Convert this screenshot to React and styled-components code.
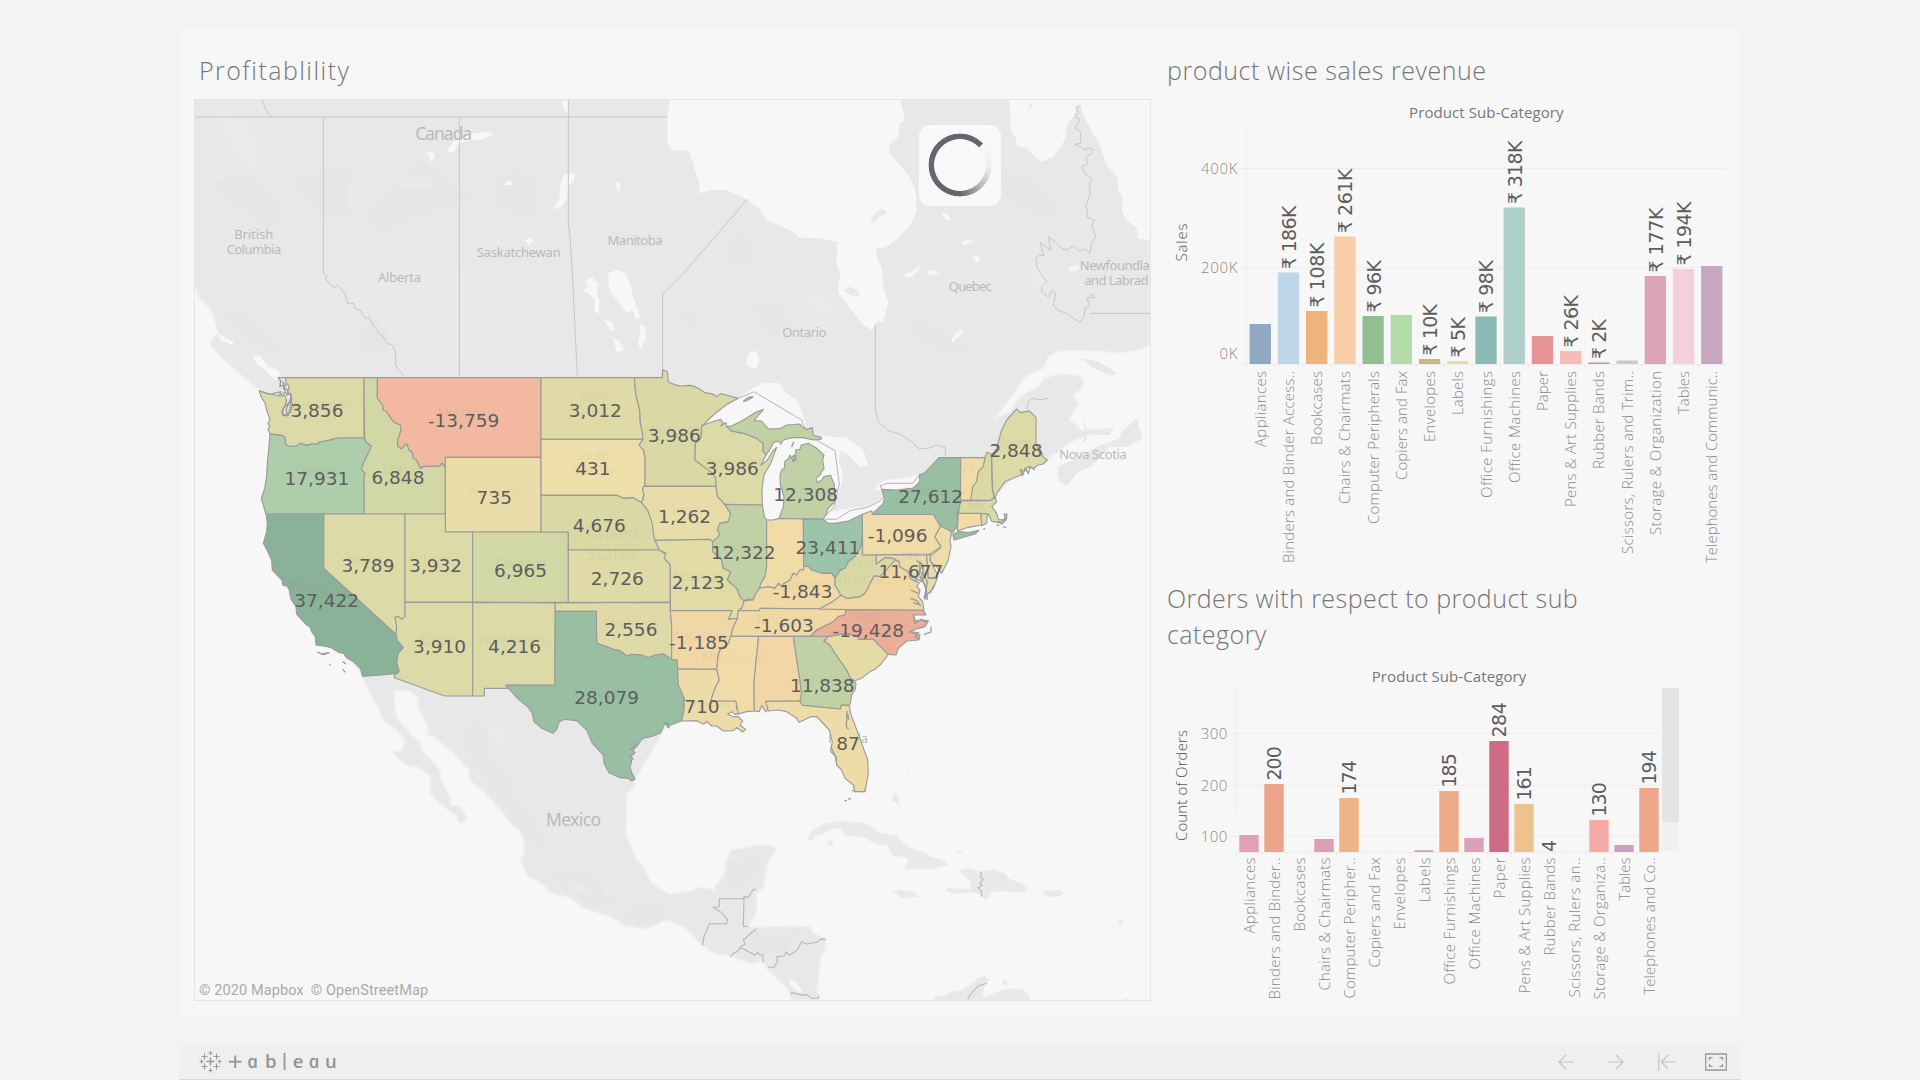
import React from 'react';
import styled, { createGlobalStyle } from 'styled-components';

const GlobalStyle = createGlobalStyle`
  * { box-sizing: border-box; }
  body { margin: 0; background: #f3f3f3; overflow: hidden; }
`;

const bookFont = '"Noto Sans", "Open Sans", sans-serif';
const numberFont = '"DejaVu Sans", "Noto Sans", sans-serif';

const Page = styled.div`
  height: 1080px;
  padding-top: 30px;
  display: flex;
  flex-direction: column;
  align-items: center;
  gap: 30px;
  background: #f3f3f3;
  font-family: ${bookFont};
`;

const Dashboard = styled.main`
  width: 1562px;
  height: 986px;
  display: flex;
  padding-left: 15px;
  background: #f7f7f7;
`;

const MapColumn = styled.section`
  width: 957px;
  display: flex;
  flex-direction: column;
`;

const ChartColumn = styled.section`
  flex: 1;
  display: flex;
  flex-direction: column;
`;

const SheetTitle = styled.h2`
  margin: 0;
  height: ${(p) => p.$height}px;
  padding: ${(p) => p.$top}px 0 0 ${(p) => p.$left}px;
  max-width: 500px;
  font-family: "Open Sans", "Noto Sans", sans-serif;
  font-weight: 300;
  font-size: 25px;
  line-height: 35.5px;
  letter-spacing: ${(p) => p.$spacing}px;
  color: #757575;
`;

const MapFrame = styled.div`
  position: relative;
  width: 957px;
  height: 902px;
  border: 1px solid #e4e4e4;
  overflow: hidden;
`;

const Drawing = styled.svg`
  display: block;
  flex: none;
`;

const Spinner = styled.div`
  position: absolute;
  left: 724px;
  top: 25px;
  width: 82px;
  height: 81px;
  border-radius: 11px;
  background: #f8f8f8;
  display: flex;
  align-items: center;
  justify-content: center;
`;

const Ring = styled.div`
  width: 64px;
  height: 64px;
  margin: -2px 0 0 -1px;
  border-radius: 50%;
  background: conic-gradient(from 47deg, rgba(98, 102, 112, 0) 0%, rgba(98, 102, 112, 0.06) 13%, rgba(98, 102, 112, 0.45) 25%, #626670 37%, #626670 100%);
  mask: radial-gradient(circle, transparent 25.5px, #000 26.3px, #000 31px, transparent 31.8px);
`;

const Attribution = styled.div`
  position: absolute;
  left: 4px;
  bottom: -1px;
  display: flex;
  gap: 7px;
  font-family: Roboto, "Liberation Sans", sans-serif;
  font-size: 14.5px;
  line-height: 20px;
  letter-spacing: 0.11px;
  color: #a9a9a9;
`;

const ChartRow = styled.div`
  display: flex;
  align-items: flex-start;
`;

const ScrollTrack = styled.div`
  width: 17px;
  height: 163px;
  margin-top: 28px;
  background: #f0f0f0;
`;

const ScrollThumb = styled.div`
  height: 134px;
  background: #e4e4e4;
`;

const Toolbar = styled.footer`
  width: 1562px;
  height: 34px;
  padding: 0 14px 2px 19px;
  display: flex;
  align-items: center;
  justify-content: space-between;
  background: #efefef;
  border-bottom: 1px solid #dadada;
`;

const ToolGroup = styled.div`
  display: flex;
  align-items: center;
  gap: 34px;
`;

const ToolButton = styled.button`
  padding: 0;
  margin: 0 0 0 ${(p) => p.$shift || 0}px;
  border: 0;
  background: none;
  display: flex;
  color: ${(p) => (p.$strong ? '#999' : '#c4c4c4')};
`;

/* ---------- map geometry ---------- */

const LAND = `M43,237 L43,795 60,840 85,860 100,885 105,910 115,940 95,955 92,975 120,1010 160,1045 200,1080 238,1112
 300,1130 300,1480 480,1880 535,1950 550,1980 575,2030 595,2065 610,2105 650,2130 672,2160 668,2192 638,2195 660,2223 690,2240 715,2242
 750,2270 752,2325 790,2360 825,2385 840,2413 862,2398 850,2370 832,2355 815,2358 808,2325 785,2285 780,2250 750,2215 725,2190 720,2165
 690,2140 650,2090 643,2040 643,2012 690,2015 715,2035 715,2065 745,2125 740,2145 760,2150 815,2195 865,2250 868,2280 920,2325 960,2370
 1000,2420 1020,2435 1030,2460 1032,2495 1020,2525 1045,2570 1090,2595 1110,2618 1175,2635 1210,2665 1290,2690 1330,2715 1390,2728
 1430,2715 1460,2700 1515,2725 1565,2775 1600,2800 1650,2810 1720,2833 1750,2825 1758,2845 1825,2910 1832,2941 1918,2941 1910,2910
 1920,2850 1922,2810 1935,2790 1938,2755 1900,2740 1890,2720 1830,2717 1740,2722 1705,2717 1730,2680 1730,2620 1750,2605 1758,2560
 1765,2525 1788,2490 1780,2478 1735,2475 1655,2490 1640,2520 1630,2570 1605,2595 1605,2610 1565,2600 1530,2613 1470,2623 1415,2590
 1390,2540 1365,2510 1338,2440 1342,2320 1365,2300 1365,2280 1500,2050 1960,2020 2110,1840 2260,1580 2410,1470 2560,1310 2602,1320
 2620,1305 2640,1295 2665,1270 2700,1255 2740,1245 2800,1232 2800,1222 2740,1232 2705,1230 2690,1215 2670,1200 2680,1175 2695,1150
 2680,1125 2708,1105 2710,1080 2700,1068 2640,1060 2590,1075 2580,1095 2520,1130 2490,1170 2455,1192 2445,1195 2480,1150 2510,1110
 2528,1080 2550,1062 2590,1045 2605,1010 2640,993 2740,993 2820,999 2880,990 2912,972 2912,237Z`;

const NORTH_WATER = [
  `M1470,237 1462,300 1462,370 1478,390 1528,393 1545,450 1558,490 1558,520 1600,510 1640,510 1702,540 1740,570 1760,600 1830,630 1860,653
   1920,655 1970,665 1973,700 1968,725 1980,760 1975,818 2010,865 2050,915 2075,930 2095,900 2110,912 2112,895 2125,850 2110,800 2105,745
   2090,710 2088,685 2115,683 2155,655 2190,615 2210,575 2208,520 2190,470 2155,430 2128,400 2128,375 2155,350 2160,310 2175,300 2160,237Z`,
  `M2488,237 2492,290 2490,295 2495,340 2508,350 2510,378 2540,385 2565,410 2585,425 2620,410 2655,360 2662,310 2680,290 2690,262 2695,250
   2705,270 2720,305 2740,340 2760,375 2770,405 2778,435 2812,470 2815,510 2828,530 2826,570 2835,595 2870,625 2875,655 2912,662 2912,237Z`,
  `M800,392 820,365 880,340 925,335 942,345 900,360 850,362 830,378 822,400Z`,
  `M740,395 765,400 763,415 755,427Z`,
  `M965,498 990,478 996,494Z`,
  `M1145,480 1155,462 1185,460 1182,480 1165,500 1160,535 1145,560 1118,570 1138,540 1140,500Z`,
  `M1148,242 1163,242 1165,280 1155,270 1148,258Z`,
  `M1308,490 1315,484 1323,500 1312,518Z`,
  `M1033,662 1050,652 1062,660 1048,676Z`,
  `M1285,760 1310,750 1335,760 1350,790 1360,830 1380,890 1370,900 1355,870 1340,880 1310,840 1295,820 1285,795Z`,
  `M1207,810 1225,800 1215,785 1235,772 1255,790 1250,810 1258,850 1255,885 1242,870 1245,840 1225,820Z`,
  `M1270,898 1295,905 1303,935 1290,930Z`,
  `M1300,952 1320,965 1332,990 1310,997Z`,
  `M1378,915 1393,915 1398,955 1382,988 1373,965 1382,940Z`,
  `M1702,1010 1712,995 1730,993 1737,1020 1735,1038 1718,1047 1700,1035Z`,
  `M2172,762 2195,755 2220,736 2218,750 2192,772 2175,773Z`,
  `M2240,755 2265,750 2277,760 2245,765Z`,
  `M2345,665 2370,657 2378,665 2348,677Z`,
  `M2315,960 2325,940 2352,926 2345,942 2318,968Z`,
  `M2283,578 2300,580 2313,600 2300,600Z`,
  `M2376,712 2390,708 2403,715 2392,728Z`,
  `M2665,742 2695,735 2700,745 2668,755Z`,
  `M218,1005 240,1008 265,1038 295,1050 305,1075 285,1080 255,1050 228,1030Z`,
  `M115,940 160,965 158,975 120,960Z`,
];

const NORTH_ISLANDS = [
  `M2070,606 2085,580 2108,565 2122,578 2100,590 2080,608Z`,
  `M1988,810 2010,800 2035,812 2038,830 2010,825Z`,
  `M2705,1015 2750,1022 2790,1045 2812,1065 2790,1065 2740,1045Z`,
  `M2545,270 2548,252 2560,248 2556,262Z`,
  `M2633,1340 2680,1320 2740,1285 2820,1255 2825,1235 2870,1195 2876,1220 2888,1255 2840,1280 2790,1280 2760,1315 2730,1340 2690,1360 2660,1398 2638,1385 2632,1360Z`,
  `M2710,1198 2720,1225 2750,1230 2795,1228 2790,1245 2750,1245 2712,1225Z`,
];

const SOUTH_ISLANDS = [
  `M441,240 455,212 490,192 540,183 600,187 630,195 655,217 708,227 745,262 800,280 808,290 845,298 865,315 820,327 728,327 745,305 740,292 700,288 680,255 650,253 610,232 555,228 545,208 520,205 485,225 465,228 460,240Z`,
  `M503,240 518,242 518,258 505,256Z`,
  `M698,395 720,389 760,395 778,410 730,416Z`,
  `M900,330 920,324 965,335 1000,328 1038,342 1045,355 1085,370 1102,385 1090,398 1020,393 995,398 978,420 965,408 940,397 880,402 857,390 862,384 930,388 932,365 905,342Z`,
  `M1152,392 1200,390 1212,400 1195,411 1152,408Z`,
  `M890,273 905,273 905,279 892,279Z`,
  `M698,100 708,98 718,120 715,132 697,122Z`,
  `M716,133 726,150 720,145Z`,
  `M815,721 835,705 850,710 870,695 900,692 945,665 955,652 975,648 990,658 975,672 968,700 970,715 1010,695 1050,685 1085,688 1105,702 1108,721Z`,
  `M1027,660 1040,660 1040,677 1030,675Z`,
  `M1374,483 1388,480 1386,494 1376,494Z`,
  `M1386,515 1391,520 1389,525Z`,
  `M1402,548 1407,555 1403,557Z`,
  `M1385,716 1405,714 1403,721Z`,
  `M740,38 747,33 745,41Z`,
];

const TERRAIN_DARK = [
  `M105,480 210,470 290,540 305,610 250,620 200,570 150,560Z`,
  `M320,490 470,430 540,440 500,520 540,600 430,590 370,540Z`,
  `M720,420 840,500 900,520 820,560 700,600 600,640 560,590Z`,
  `M930,500 1000,440 1080,480 1060,600 960,560Z`,
  `M520,950 590,870 640,940 620,1010 560,1010Z`,
  `M100,870 190,880 240,930 330,1010 260,1000 160,920Z`,
  `M1650,650 1740,670 1700,740 1640,720Z`,
  `M1720,850 1800,840 1840,930 1760,960Z`,
  `M1500,880 1560,860 1550,920 1510,920Z`,
  `M2200,880 2330,960 2400,1000 2300,1010 2190,940Z`,
  `M2440,440 2540,470 2640,560 2620,600 2500,560Z`,
  `M850,2150 880,2090 930,2130 920,2190 1000,2270 1010,2340 1080,2420 1110,2470 1060,2480 960,2340 870,2230Z`,
  `M1110,2560 1200,2550 1290,2590 1330,2650 1250,2660 1150,2610Z`,
  `M1380,2640 1440,2650 1450,2700 1380,2720 1330,2680Z`,
  `M1640,2530 1740,2510 1720,2590 1650,2600Z`,
  `M1700,2740 1880,2730 1800,2800 1720,2790Z`,
  `M60,1000 240,1090 180,1060Z`,
];

const TERRAIN_LIGHT = [
  `M110,290 190,300 260,400 300,470 220,450 150,370Z`,
  `M330,340 380,360 390,410 330,410Z`,
  `M520,450 560,440 550,610 500,560Z`,
  `M640,480 740,460 760,500 660,500Z`,
  `M330,590 380,560 400,610 370,700 310,680Z`,
  `M560,700 640,640 760,690 900,800 830,1060 660,1060 640,960 560,860Z`,
  `M850,880 1100,820 1180,1060 850,1060Z`,
  `M890,740 1010,740 1090,790 900,800Z`,
  `M1170,600 1260,640 1230,700 1180,700Z`,
  `M1010,430 1060,370 1120,400 1060,440Z`,
  `M1900,800 1960,870 1920,900 1880,850Z`,
  `M2230,430 2400,440 2430,520 2300,560Z`,
  `M2540,680 2620,790 2560,820 2540,760Z`,
  `M2260,290 2400,240 2440,270 2330,300Z`,
  `M920,2110 980,2110 980,2170 930,2160Z`,
  `M1160,2580 1210,2590 1230,2620 1170,2610Z`,
  `M1260,2580 1340,2570 1360,2640 1280,2630Z`,
];

const PROVINCE_LINES = [
  `M245,240 255,262 262,275 275,291`,
  `M46,291 1461,291`,
  `M430,291 430,758 440,768 437,778 450,792 462,802 472,795 488,812 497,825 502,850 512,852 520,850 526,866 540,870 557,896 566,890 580,915 597,940 612,952 622,970 636,975 645,992 648,1020 645,1032 655,1050 674,1070`,
  `M838,291 838,1070`,
  `M1165,240 1165,610 1170,650 1178,780 1192,1070`,
  `M1702,538 1515,755 1448,822 1448,1050`,
  `M2086,912 2086,1168 2095,1205 2125,1232 2160,1242 2195,1265 2215,1285 2245,1285 2270,1275 2295,1282 2297,1310`,
  `M2732,880 2912,880`,
  `M2703,258 2688,262 2695,278 2685,292 2700,298 2685,325 2702,335 2702,370 2685,373 2700,380 2718,392 2720,383 2740,388 2735,400 2722,408 2718,420 2725,430 2705,440 2715,462 2735,475 2728,500 2732,520 2717,560 2723,575 2720,590 2743,600 2735,620 2748,648 2735,668 2730,700 2715,688 2695,692 2680,678 2660,690 2645,685 2625,665 2605,650 2612,690 2597,680 2580,668 2592,708 2580,705 2567,715 2572,745 2585,765 2602,785 2595,790 2585,800 2585,815 2605,832 2615,812 2627,820 2620,855 2635,872 2660,880 2680,895 2700,907 2712,890 2715,865 2730,855 2720,835 2740,822 2745,832 2725,835`,
  `M2520,1178 2540,1175 2545,1145 2560,1135 2580,1140 2605,1135`,
  `M2710,1263 2720,1253`,
];

const SOUTH_LINES = [
  `M127,557 132,530 148,491 200,491 203,480 185,458 160,442 177,440 178,416 252,416 252,410 265,412 280,388 288,388`,
  `M252,416 250,499 263,499`,
  `M290,506 270,522 250,540 255,552 240,562 235,572 218,582 212,591`,
  `M240,562 285,585 292,577 300,585 308,583 310,608`,
  `M325,622 342,622 352,605 350,590 372,588 378,576 388,586 412,570 425,545 440,552 470,547 485,536 498,539`,
  `M393,703 396,698 430,706 440,703 455,715 475,715 476,706`,
  `M964,335 962,352 970,358 960,370 966,376 954,383 965,395 965,410`,
  `M923,718 932,702 955,678 981,670`,
];

const LAKES = [
  `M312,192 340,165 415,115 440,95 490,68 540,70 552,95 590,120 605,150 618,200 645,222 700,232 740,232 790,270 805,315 780,320 745,285 722,272
   716,300 730,350 716,400 700,445 668,477 520,482 500,478 486,440 486,385 480,320 495,270 470,235 380,200 360,180Z`,
  `M668,477 690,455 730,447 800,438 855,410 848,440 787,463 745,485 705,494Z`,
  `M820,388 850,362 930,350 957,340 960,365 940,384 845,392Z`,
  `M440,5 455,-5 475,10 460,25Z`,
];

const BORDER_LINES = [
  `M415,115 462,95 605,180 612,198 640,235 705,272 718,372 702,440 668,477 710,478 750,452 800,442 840,423 850,412`,
  `M845,388 840,378 860,370 938,370 957,345`,
];

const olive = '#dcdaa6';
const sand = '#eddca8';
const peach = '#f1d9a6';
const fern = '#c0d2a5';
const moss = '#d1d8a5';
const jade = '#98bfa2';

/* [fill, path] in the western sheet */
const WEST = [
  [olive, `M136,53 372,53 372,234 293,234 265,241 240,246 231,252 212,252 203,256 180,250 168,259 143,258 136,250 135,232 125,226 108,224 90,221 84,208 89,198 84,190 90,178 83,160 75,130 62,108 58,92 88,102 120,108 134,106 140,122 134,140 125,155 130,165 146,160 152,130 152,105 142,95 148,80 138,68Z`],
  ['#adcdab', `M90,222 125,226 135,232 136,250 143,258 168,259 180,250 203,256 212,252 231,252 240,246 265,241 293,234 374,234 378,246 394,258 387,275 372,305 364,328 376,340 372,352 373,462 78,462 68,430 64,415 74,385 80,350 82,310 87,260Z`],
  [moss, `M372,53 412,53 412,114 428,135 430,150 440,155 460,185 482,196 483,212 473,240 473,258 485,266 500,250 507,270 516,275 520,295 530,300 541,325 548,320 600,318 605,308 616,322 616,462 373,462 372,352 376,340 364,328 372,305 387,275 394,258 378,246 374,234Z`],
  ['#f2b9a0', `M412,53 903,53 903,292 616,292 616,322 605,308 600,318 570,318 548,320 541,325 530,300 520,295 516,275 507,270 500,250 485,266 473,258 473,240 483,212 482,196 460,185 440,155 430,150 428,135 412,114Z`],
  ['#ebdda9', `M616,292 903,292 903,516 616,516Z`],
  [olive, `M251,462 495,462 495,770 485,778 475,770 465,772 470,800 468,823 251,625Z`],
  [olive, `M495,462 616,462 616,516 698,516 698,727 495,727Z`],
  [moss, `M698,516 985,516 985,727 698,727Z`],
  ['#8ab298', `M78,462 251,462 251,625 468,823 473,842 490,863 475,880 470,905 478,935 462,942 368,949 361,925 340,905 318,892 312,880 298,878 275,864 262,860 228,855 226,830 215,815 210,800 200,795 170,762 168,740 152,715 148,690 140,678 129,676 126,660 97,630 95,600 82,572 70,550 80,515 82,490Z`],
  [olive, `M495,727 698,727 698,1008 614,1008 463,953 464,944 478,935 470,905 475,880 490,863 473,842 468,823 470,800 465,772 475,770 485,778 495,770Z`],
  [olive, `M698,727 946,729 944,975 798,975 803,985 733,985 733,1008 698,1008Z`],
  ['#e0dba6', `M903,53 1183,53 1187,100 1199,150 1201,190 1207,215 1209,238 903,238Z`],
  ['#eedea9', `M903,238 1209,238 1197,255 1210,270 1215,290 1215,378 1208,385 1212,405 1205,428 1180,413 1150,415 1130,406 903,406Z`],
  ['#dad9a6', `M903,406 1130,406 1150,415 1180,413 1205,428 1223,450 1240,495 1243,535 1258,570 985,570 985,516 903,516Z`],
  ['#e0dba6', `M985,570 1258,570 1270,578 1278,583 1273,595 1291,615 1291,727 985,727Z`],
  ['#e0dba6', `M946,729 1291,727 1291,752 1295,800 1295,898 1270,882 1245,885 1225,893 1205,885 1175,883 1160,888 1140,872 1120,868 1095,858 1070,850 1069,754 946,754Z`],
  [jade, `M946,754 1069,754 1070,850 1095,858 1120,868 1140,872 1160,888 1175,883 1205,885 1225,893 1245,885 1270,882 1295,898 1312,900 1314,950 1325,980 1333,1010 1332,1040 1325,1083 1300,1092 1290,1096 1283,1102 1275,1088 1270,1100 1262,1118 1240,1128 1222,1132 1205,1138 1190,1160 1178,1170 1185,1178 1172,1190 1175,1205 1170,1222 1176,1240 1185,1257 1175,1263 1165,1255 1140,1253 1107,1238 1092,1210 1090,1185 1057,1150 1040,1110 1010,1082 975,1078 958,1085 950,1108 939,1120 905,1105 882,1085 877,1060 865,1042 835,1018 810,990 798,976 944,975Z`],
];

/* [fill, path] in the eastern sheet, shifted 1080 units */
const EAST = [
  ['#dad9a6', `M103,53 187,53 188,29 202,35 205,66 222,73 240,78 270,76 285,80 295,85 315,98 340,103 350,110 362,101 390,108 415,115 380,133 340,165 312,192 305,198 303,235 286,250 285,300 318,325 338,340 347,355 348,379 135,379 135,290 130,270 117,255 129,238 127,215 121,190 119,150 107,100Z`],
  [olive, `M312,194 345,183 362,178 370,190 362,198 378,188 380,200 395,213 430,220 470,235 490,250 489,272 498,285 483,315 500,303 520,272 530,262 512,310 492,345 486,385 487,435 374,433 352,410 348,379 347,355 338,340 318,325 285,300 286,250 303,235 305,198Z`],
  [fern, `M380,200 395,198 430,180 470,155 491,148 478,162 462,182 485,183 505,207 540,206 560,195 600,192 606,200 620,208 637,203 640,225 665,232 662,238 640,240 610,233 575,233 550,240 542,252 535,243 520,248 510,268 498,285 489,272 490,250 470,235 430,220 395,213Z`],
  [fern, `M668,477 537,475 550,440 552,410 541,375 540,345 545,330 553,325 555,303 565,297 570,285 580,305 588,285 587,270 600,268 604,255 625,250 650,265 672,285 668,300 672,325 660,345 648,355 652,368 665,360 672,350 692,346 703,375 704,425 682,448 680,462Z`],
  ['#e8dca8', `M130,379 348,379 352,410 374,433 392,460 385,485 360,490 352,510 360,520 355,530 338,545 330,538 165,541 160,520 157,490 143,450 125,428 133,405 128,395Z`],
  ['#e1dba6', `M165,541 330,538 338,545 338,575 365,600 370,625 392,635 382,660 410,685 420,710 433,722 425,745 415,752 412,775 385,778 396,752 211,752 211,615 193,595 198,580 178,570Z`],
  [fern, `M374,433 487,435 493,470 500,480 500,620 495,650 483,670 478,690 465,705 460,720 445,717 430,722 420,710 410,685 382,660 392,635 370,625 365,600 338,575 338,545 355,530 360,520 352,510 360,490 385,485 392,460Z`],
  ['#f1dba7', `M500,480 520,480 537,475 610,477 611,630 600,630 590,645 580,640 570,660 550,672 545,680 535,670 525,685 505,680 478,685 483,670 495,650 500,620Z`],
  ['#9cc4ab', `M610,478 668,477 685,490 705,490 745,483 787,463 787,530 783,560 765,590 745,605 735,625 720,630 712,655 695,640 665,640 635,630 625,620 611,618Z`],
  [peach, `M433,722 460,720 465,705 478,685 505,680 525,685 535,670 545,680 550,672 570,660 580,640 590,645 600,630 611,630 611,618 625,620 635,630 665,640 695,640 705,655 705,675 723,706 698,725 658,747 480,745 478,752 415,752 425,745Z`],
  [peach, `M415,752 478,752 480,745 738,747 735,765 715,770 700,785 680,795 650,810 632,828 392,829 400,800 412,775Z`],
  ['#f2d7a6', `M211,752 396,752 385,778 412,775 400,800 392,829 385,850 360,870 355,885 350,928 233,927 232,900 215,898 215,800Z`],
  [sand, `M233,927 350,928 358,960 345,985 332,1023 408,1023 410,1045 420,1060 405,1063 395,1055 383,1063 400,1070 415,1070 428,1083 420,1095 437,1108 428,1116 410,1102 400,1112 370,1113 350,1098 335,1098 322,1085 310,1092 290,1082 245,1083 252,1050 253,1015 235,975Z`],
  ['#f1dba8', `M392,829 476,829 462,965 463,1053 440,1055 415,1062 408,1023 332,1023 345,985 358,960 350,928 355,885 360,870 385,850Z`],
  ['#f2d6a5', `M476,829 580,829 598,950 605,1000 600,1023 497,1024 505,1045 497,1056 485,1036 478,1055 463,1053 462,965Z`],
  [fern, `M580,829 685,829 672,843 690,855 705,880 740,930 752,955 768,970 765,990 755,1005 750,1035 724,1035 722,1047 607,1036 600,1023 605,1000 598,950Z`],
  [sand, `M497,1024 600,1023 607,1036 722,1047 724,1035 748,1038 752,1060 785,1150 803,1200 805,1240 795,1295 765,1295 760,1275 735,1255 725,1230 710,1215 708,1190 692,1175 697,1145 688,1110 650,1070 632,1070 598,1087 590,1075 560,1055 535,1050 505,1053Z`],
  ['#e6dba7', `M672,843 685,829 740,820 775,830 777,838 820,838 865,883 843,912 825,928 810,935 785,955 765,962 752,955 740,930 705,880 690,855Z`],
  ['#ebae99', `M738,749 970,750 978,765 940,765 945,780 985,782 975,800 955,805 930,815 960,825 955,840 920,843 895,865 888,885 865,883 820,838 775,838 775,830 740,820 685,829 632,828 650,810 680,795 700,785 715,770 735,765Z`],
  ['#f0d8a5', `M658,747 698,725 723,706 740,715 780,710 795,700 805,680 822,647 840,650 868,620 885,600 898,606 900,620 925,635 930,655 958,668 950,680 960,690 955,710 968,725 972,750 738,749Z`],
  ['#d9d9a6', `M705,655 720,632 735,625 745,605 765,590 783,560 787,530 787,585 829,585 829,612 855,592 880,595 898,605 885,600 868,620 840,650 822,647 805,680 795,700 780,710 740,715 723,706 705,675Z`],
  ['#f1dba8', `M787,463 815,453 817,463 1000,463 1010,480 1022,498 1005,530 1023,560 990,582 788,585Z`],
  [jade, `M817,463 850,430 853,415 845,388 890,390 940,384 960,365 957,345 975,338 1017,293 1082,293 1083,340 1080,420 1085,425 1072,460 1072,500 1058,517 1020,498 1010,480 1000,463Z`],
  [jade, `M1058,522 1080,515 1105,518 1137,511 1125,522 1062,540Z`],
  ['#f1dba7', `M1082,293 1157,293 1150,320 1135,335 1130,370 1115,420 1082,421Z`],
  ['#dad9a6', `M1155,293 1160,277 1174,282 1177,390 1183,412 1170,422 1112,420 1118,380 1130,365 1135,335 1150,320Z`],
  [olive, `M1175,285 1190,265 1205,210 1220,180 1250,147 1260,158 1288,153 1308,172 1308,255 1325,275 1328,290 1342,300 1330,312 1315,315 1300,325 1285,320 1272,335 1262,328 1265,345 1250,350 1215,365 1190,400 1185,415 1178,390Z`],
  ['#d9d9a6', `M1082,421 1170,422 1185,412 1190,425 1175,440 1182,448 1190,460 1195,478 1208,480 1216,475 1212,462 1220,463 1220,475 1200,488 1175,484 1165,462 1075,460Z`],
  ['#f1dba7', `M1075,460 1143,460 1145,495 1105,502 1072,513Z`],
  ['#dad9a6', `M1143,460 1162,462 1160,490 1145,497Z`],
  ['#eddda9', `M1022,498 1055,515 1050,545 1053,560 1045,600 1025,640 1010,620 992,605 990,590 1023,562 1005,530Z`],
  ['#e8dca8', `M829,585 980,585 985,655 1012,655 1000,685 985,700 975,718 978,690 965,650 970,620 960,605 958,640 965,665 940,650 925,635 900,620 898,605 880,595 855,592 829,612Z`],
  ['#e8dca8', `M980,585 992,583 990,600 1010,640 1012,653 985,652Z`],
];

const INLETS = [
  `M125,65 138,75 130,85 145,90 140,105 152,100 155,120 145,130 130,145 128,165 138,168 150,158 158,135 150,120 138,150 145,168`,
  `M62,94 90,103 122,95 118,105 136,98 130,75 120,80 122,62 115,53 136,53`,
  `M148,672 160,678 158,690 165,698 M150,670 187,673`,
  `M232,876 245,882 268,878 250,884Z`,
  `M308,905 318,912 M308,928 316,937 M268,914 273,916`,
  `M1170,1170 1180,1162 1188,1150 M1172,1185 1180,1200 M1275,1088 1285,1092 1288,1105`,
  `M1663,285 1668,300 1660,303 1658,290Z M1661,245 1655,262`,
  `M1510,124 1525,112 1540,110 1520,122Z`,
  `M1821,1052 1819,1100 1826,1108 M1823,1060 1826,1080`,
  `M1772,1160 1780,1175 1786,1190 1790,1208`,
  `M1835,1290 1848,1296 M1874,1290 1870,1297`,
  `M2030,600 2045,615 2040,635 2055,650 2045,660 2058,680 2062,720`,
  `M2045,610 2050,640 2062,665 2058,690 2052,715`,
  `M2005,640 2025,650 2030,665 2015,658 M2010,715 2030,722 2040,735 2020,728 M2012,690 2035,700`,
  `M2070,700 2075,690 2082,675 M2020,765 2025,790 2045,778 2060,790 M2008,815 2035,818 2025,830 2040,838`,
  `M2052,823 2072,817 2074,800`,
  `M2275,482 2285,492 2298,480 2300,460 M2270,497 2278,494 M2290,501 2298,502 M2230,508 2235,505`,
  `M2342,330 2348,345 2356,325 2365,340 2370,320 2385,330`,
];

const STATE_VALUES = [
  ['3,856', 232, 171], ['17,931', 232, 375], ['6,848', 475, 372], ['-13,759', 672, 202], ['735', 764, 432],
  ['3,789', 385, 636], ['3,932', 588, 636], ['6,965', 843, 651], ['37,422', 261, 741], ['3,910', 600, 879],
  ['4,216', 825, 879], ['3,012', 1067, 172], ['431', 1060, 346], ['4,676', 1079, 516], ['2,726', 1133, 675],
  ['2,556', 1174, 830], ['28,079', 1101, 1034], ['3,986', 1304, 246], ['3,986', 1478, 345], ['1,262', 1335, 489],
  ['2,123', 1376, 687], ['-1,185', 1378, 868], ['710', 1387, 1061], ['12,322', 1511, 597], ['12,308', 1698, 425],
  ['23,411', 1765, 583], ['-1,843', 1689, 714], ['-1,603', 1633, 817], ['11,838', 1748, 996], ['87', 1825, 1170],
  ['-19,428', 1886, 831], ['-1,096', 1974, 548], ['11,677', 2014, 654], ['27,612', 2073, 431], ['2,848', 2329, 291],
];

/* [text, centre x, baseline, length] */
const STATE_NAMES = [
  ['Washington', 234, 146, 200], ['Oregon', 230, 345, 130], ['Idaho', 475, 343, 95], ['Montana', 665, 172, 145],
  ['Wyoming', 762, 408, 165], ['Nevada', 385, 612, 130], ['Utah', 588, 612, 80], ['Colorado', 843, 622, 150],
  ['California', 258, 715, 165], ['Arizona', 600, 855, 130], ['New Mexico', 823, 855, 210], ['North', 1067, 122, 100],
  ['Dakota', 1067, 165, 125], ['South', 1058, 300, 100], ['Dakota', 1058, 343, 125], ['Oklahoma', 1172, 804, 170],
  ['Texas', 1102, 1012, 95], ['Minnesota', 1305, 222, 185], ['Wisconsin', 1478, 322, 175], ['Iowa', 1335, 463, 80],
  ['Missouri', 1376, 662, 150], ['Arkansas', 1378, 843, 160], ['Mississippi', 1485, 905, 200], ['Louisiana', 1387, 1040, 165],
  ['Illinois', 1515, 573, 130], ['Michigan', 1698, 402, 150], ['Ohio', 1765, 558, 85], ['Kentucky', 1690, 688, 160],
  ['Tennessee', 1635, 793, 180], ['Georgia', 1748, 970, 140], ['West', 1860, 622, 90], ['Virginia', 1857, 668, 140],
  ['North', 1886, 782, 100], ['Carolina', 1886, 825, 150], ['New York', 2073, 404, 160], ['VT', 2182, 342, 45],
  ['MA', 2208, 443, 50], ['MD', 2008, 600, 50], ['NJ', 2100, 560, 40], ['Maine', 2330, 260, 100],
];

const PLACES = [
  ['British', 253.7, 238.5, 39, 13], ['Columbia', 254, 253.7, 54.5, 13], ['Alberta', 399.5, 282, 43, 13],
  ['Saskatchewan', 518.7, 257, 84, 13], ['Manitoba', 635, 245, 55, 13], ['Canada', 443.7, 139.5, 57, 17.5],
  ['Ontario', 804.3, 337, 44, 13], ['Quebec', 970.3, 291, 43, 13], ['Newfoundla', 1114.8, 269.5, 70, 13],
  ['and Labrad', 1116.4, 284.5, 64, 13], ['Nova Scotia', 1093, 458.5, 67.5, 13], ['Mexico', 573.5, 825.5, 55, 17.5],
];

const PlaceText = styled.text`
  font-family: ${bookFont};
  font-size: ${(p) => p.$size || 13}px;
  fill: ${(p) => p.$tone || '#b9b9b9'};
  text-anchor: middle;
`;

const ValueText = styled.text`
  font-family: ${numberFont};
  font-size: ${(p) => p.$size || 18.5}px;
  fill: #5d5d5d;
  text-anchor: ${(p) => p.$anchor || 'middle'};
`;

const AxisText = styled.text`
  font-family: "Open Sans", "Noto Sans", sans-serif;
  font-weight: ${(p) => p.$weight || 300};
  font-size: 15px;
  fill: ${(p) => p.$tone || '#8a8a8a'};
  text-anchor: ${(p) => p.$anchor || 'end'};
`;

const Shapes = ({ list, ...rest }) => (
  <g {...rest}>
    {list.map((d, i) => <path key={i} d={d} />)}
  </g>
);

const States = ({ list, at }) => (
  <g transform={`translate(${at} 360) scale(0.33333)`} stroke="#9b9b9b" strokeWidth="3.4" strokeLinejoin="round">
    {list.map(([fill, d], i) => <path key={i} d={d} fill={fill} />)}
  </g>
);

function ProfitMap() {
  const north = 'translate(180 20) scale(0.33333)';
  const south = 'translate(660 760) scale(0.33333)';
  const west = 'translate(240 360) scale(0.33333)';
  const east = 'translate(600 360) scale(0.33333)';
  return (
    <Drawing width="955" height="900" viewBox="195 100 955 900">
      <g transform={north}>
        <path d={LAND} fill="#e8e8e8" stroke="#f1f1f1" strokeWidth="5" strokeLinejoin="round" />
        <Shapes list={TERRAIN_DARK} fill="#e5e5e5" opacity="0.45" />
        <Shapes list={TERRAIN_LIGHT} fill="#ebebeb" opacity="0.6" />
        <Shapes list={NORTH_WATER} fill="#f7f7f7" />
        <Shapes list={NORTH_ISLANDS} fill="#e8e8e8" />
      </g>
      <Shapes list={SOUTH_ISLANDS} transform={south} fill="#e9e9e9" stroke="#f1f1f1" strokeWidth="2" />
      <path d="M388,660 405,662 425,690 430,700 405,690 388,672Z" transform={south} fill="#f7f7f7" />
      <Shapes list={PROVINCE_LINES} transform={north} fill="none" stroke="#c6c6c6" strokeWidth="3" />
      <Shapes list={SOUTH_LINES} transform={south} fill="none" stroke="#b5b5b5" strokeWidth="3.2" />
      {PLACES.map(([t, x, y, len, size]) => (
        <PlaceText key={t} x={x} y={y} textLength={len} $size={size}>{t}</PlaceText>
      ))}
      <Shapes list={LAKES} transform={east} fill="#f7f7f7" />
      <Shapes list={BORDER_LINES} transform={east} fill="none" stroke="#b4b4b4" strokeWidth="3" />
      <PlaceText x="848" y="742.5" textLength="40" $tone="#b9b9b9">Florida</PlaceText>
      <States list={WEST} at={240} />
      <States list={EAST} at={600} />
      <Shapes list={INLETS} transform={west} fill="none" stroke="#9b9b9b" strokeWidth="4" />
      <path d="M553,122 561,122 M565,117 573,116" transform={south} fill="none" stroke="#9b9b9b" strokeWidth="4" />
      <g opacity="0.055">
        {STATE_NAMES.map(([t, x, y, len], i) => (
          <PlaceText key={i} x={240 + x / 3} y={360 + y / 3} textLength={len / 3} $tone="#555">{t}</PlaceText>
        ))}
        <PlaceText x="612" y="539" textLength="52" $size={17.5} $tone="#555">United</PlaceText>
        <PlaceText x="612" y="560" textLength="52" $size={17.5} $tone="#555">States</PlaceText>
      </g>
      {STATE_VALUES.map(([t, x, y], i) => (
        <ValueText key={i} x={239.6 + x / 3} y={359.6 + y / 3}>{t}</ValueText>
      ))}
    </Drawing>
  );
}

/* ---------- bar charts ---------- */

/* name, label length, bar top, fill, bar caption, caption length */
const SALES = [
  ['Appliances', 76, 324, '#8fa8c4'],
  ['Binders and Binder Access..', 192, 272.5, '#bed6e9', '₹ 186K', 63.5],
  ['Bookcases', 74, 311, '#efb47b', '₹ 108K', 65],
  ['Chairs & Chairmats', 133, 236.5, '#f7cea8', '₹ 261K', 64.5],
  ['Computer Peripherals', 153, 316, '#93be90', '₹ 96K', 52.5],
  ['Copiers and Fax', 109, 315, '#b2dba8'],
  ['Envelopes', 71, 359, '#ccb978', '₹ 10K', 51.5],
  ['Labels', 44, 361, '#efdc92', '₹ 5K', 40.5],
  ['Office Furnishings', 127, 316.5, '#8bb9b5', '₹ 98K', 53],
  ['Office Machines', 112, 207.5, '#afcfc9', '₹ 318K', 63.5],
  ['Paper', 40, 336, '#e79294'],
  ['Pens & Art Supplies', 136, 351, '#f7bbb8', '₹ 26K', 52.5],
  ['Rubber Bands', 98, 362.5, '#a9a3a3', '₹ 2K', 40],
  ['Scissors, Rulers and Trim..', 183, 360.5, '#cfc9c5'],
  ['Storage & Organization', 164, 276, '#dca3b9', '₹ 177K', 65],
  ['Tables', 43, 269, '#f4cfdd', '₹ 194K', 64],
  ['Telephones and Communic..', 192, 266, '#c6a7bf'],
];

const ORDERS = [
  ['Appliances', 76, 835, '#e2a0b8'],
  ['Binders and Binder..', 142, 784, '#eca489', '200', 34.5],
  ['Bookcases', 74],
  ['Chairs & Chairmats', 133, 839, '#dc9fba'],
  ['Computer Peripher..', 141, 798, '#edb487', '174', 34.5],
  ['Copiers and Fax', 110],
  ['Envelopes', 72],
  ['Labels', 45, 850.3, '#c9a0c5'],
  ['Office Furnishings', 127, 791, '#edac87', '185', 34.5],
  ['Office Machines', 112, 838, '#dd9fba'],
  ['Paper', 41, 741, '#cd6c84', '284', 35.5],
  ['Pens & Art Supplies', 136, 804, '#edc28d', '161', 34.5],
  ['Rubber Bands', 98, 856, 'none', '4', 11],
  ['Scissors, Rulers an..', 140],
  ['Storage & Organiza..', 142, 820, '#f5aca6', '130', 34.5],
  ['Tables', 43, 845, '#cf9fc1'],
  ['Telephones and Co..', 137, 788, '#eca888', '194', 34.5],
];

function Bars({ data, left, pitch, inset, width, base, labelTop }) {
  return data.map(([name, len, top, fill, caption, capLen], i) => {
    const x = left + pitch * i;
    const mid = x + inset + width / 2;
    return (
      <g key={name}>
        <path d={`M${x} ${base}v5`} stroke="#ececec" />
        {top < base && <rect x={x + inset} y={top} width={width} height={base - top} fill={fill} />}
        {caption && (
          <ValueText $size={19} $anchor="start" textLength={capLen} transform={`translate(${mid + 7.4} ${Math.min(top - 3.4, base)}) rotate(-90)`}>
            {caption}
          </ValueText>
        )}
        <AxisText textLength={len} transform={`translate(${mid + 5.5} ${labelTop}) rotate(-90)`}>{name}</AxisText>
      </g>
    );
  });
}

function SalesChart() {
  return (
    <Drawing width="588" height="469" viewBox="1151 99 588 469">
      <AxisText x="1486.3" y="117.5" $anchor="middle" $weight={400} $tone="#777" textLength="154.5">Product Sub-Category</AxisText>
      <path d="M1239 168.5H1726M1239 267.5H1726M1239 364.5H1726M1246.5 125V364" stroke="#ededed" fill="none" />
      <AxisText x="1237.5" y="173.7" textLength="36.5">400K</AxisText>
      <AxisText x="1237.5" y="272.7" textLength="36.5">200K</AxisText>
      <AxisText x="1237.5" y="358.7" textLength="18">0K</AxisText>
      <AxisText $weight={300} $tone="#555" $anchor="middle" textLength="38" transform="translate(1187 242.5) rotate(-90)">Sales</AxisText>
      <Bars data={SALES} left={1246.5} pitch={28.22} inset={3.1} width={21.3} base={364} labelTop={371} />
    </Drawing>
  );
}

function OrdersChart() {
  return (
    <ChartRow>
      <Drawing width="511" height="345" viewBox="1151 660 511 345">
        <AxisText x="1449" y="681.7" $anchor="middle" $weight={400} $tone="#777" textLength="154.5">Product Sub-Category</AxisText>
        <path d="M1229 733.5H1661M1229 785.5H1661M1229 836.5H1661M1236 852.5H1661M1236.5 688V815" stroke="#ededed" fill="none" />
        <AxisText x="1227.3" y="739" textLength="26.5">300</AxisText>
        <AxisText x="1227.3" y="791" textLength="26.5">200</AxisText>
        <AxisText x="1227.3" y="842" textLength="26.5">100</AxisText>
        <AxisText $weight={300} $tone="#555" $anchor="middle" textLength="111" transform="translate(1187 785.5) rotate(-90)">Count of Orders</AxisText>
        <Bars data={ORDERS} left={1236.5} pitch={25} inset={2.8} width={19.4} base={852} labelTop={857.5} />
      </Drawing>
      <ScrollTrack><ScrollThumb /></ScrollTrack>
    </ChartRow>
  );
}

/* ---------- footer ---------- */

const LogoLetter = styled.text`
  font-family: "Open Sans", "Noto Sans", sans-serif;
  font-weight: 600;
  font-size: 18.5px;
  font-style: ${(p) => (p.$round ? 'italic' : 'normal')};
  fill: #959595;
`;

const Plus = ({ x, y, r, w = 1.1 }) => (
  <path d={`M${x - r} ${y}H${x + r}M${x} ${y - r}V${y + r}`} stroke="#9a9a9a" strokeWidth={w} />
);

function Logo() {
  return (
    <Drawing width="140" height="26" viewBox="198 1049 140 26">
      <Plus x={210.5} y={1061.5} r={4} w={1.5} />
      <Plus x={204.5} y={1056.5} r={3} />
      <Plus x={216.5} y={1056.5} r={3} />
      <Plus x={204.5} y={1066.5} r={3} />
      <Plus x={216.5} y={1066.5} r={3} />
      <Plus x={210.5} y={1053} r={2} />
      <Plus x={210.5} y={1070.5} r={2} />
      <Plus x={201.5} y={1061.5} r={2} />
      <Plus x={219.5} y={1061.5} r={2} />
      <Plus x={235.2} y={1061.7} r={6.3} w={2} />
      <LogoLetter $round transform="translate(248.3 1068) skewX(12)">a</LogoLetter>
      <LogoLetter x="265" y="1068">b</LogoLetter>
      <path d="M284.5 1053V1070" stroke="#959595" strokeWidth="1.8" />
      <LogoLetter x="292.8" y="1068">e</LogoLetter>
      <LogoLetter $round transform="translate(309.7 1068) skewX(12)">a</LogoLetter>
      <LogoLetter x="325" y="1068">u</LogoLetter>
    </Drawing>
  );
}

const Glyph = ({ w, d, sw = 1.2 }) => (
  <Drawing width={w} height="18" viewBox={`0 0 ${w} 18`} fill="none" stroke="currentColor" strokeWidth={sw}>
    <path d={d} />
  </Drawing>
);

export default function App() {
  return (
    <Page>
      <GlobalStyle />
      <Dashboard>
        <MapColumn>
          <SheetTitle $height={69} $top={23} $left={5} $spacing={1.45}>Profitablility</SheetTitle>
          <MapFrame>
            <ProfitMap />
            <Spinner><Ring /></Spinner>
            <Attribution><span>© 2020 Mapbox</span><span>© OpenStreetMap</span></Attribution>
          </MapFrame>
        </MapColumn>
        <ChartColumn>
          <SheetTitle $height={69} $top={23} $left={16} $spacing={0.54}>product wise sales revenue</SheetTitle>
          <SalesChart />
          <SheetTitle $height={92} $top={13} $left={16} $spacing={0.46}>Orders with respect to product sub category</SheetTitle>
          <OrdersChart />
        </ChartColumn>
      </Dashboard>
      <Toolbar>
        <Logo />
        <ToolGroup>
          <ToolButton><Glyph w={16} d="M0.8 9H16M8 2 0.8 9 8 16" /></ToolButton>
          <ToolButton><Glyph w={16} d="M0 9H15.2M8 2 15.2 9 8 16" /></ToolButton>
          <ToolButton><Glyph w={18} d="M0.8 0V18M3.3 9H18M10 2 3.3 9 10 16" /></ToolButton>
          <ToolButton $strong $shift={-5}>
            <Glyph w={22} sw={1.3} d="M.7 1H21.3V17H.7ZM4.5 7V4.7H7.5M14.5 4.7H17.5V7M17.5 11V13.3H14.5M7.5 13.3H4.5V11" />
          </ToolButton>
        </ToolGroup>
      </Toolbar>
    </Page>
  );
}
